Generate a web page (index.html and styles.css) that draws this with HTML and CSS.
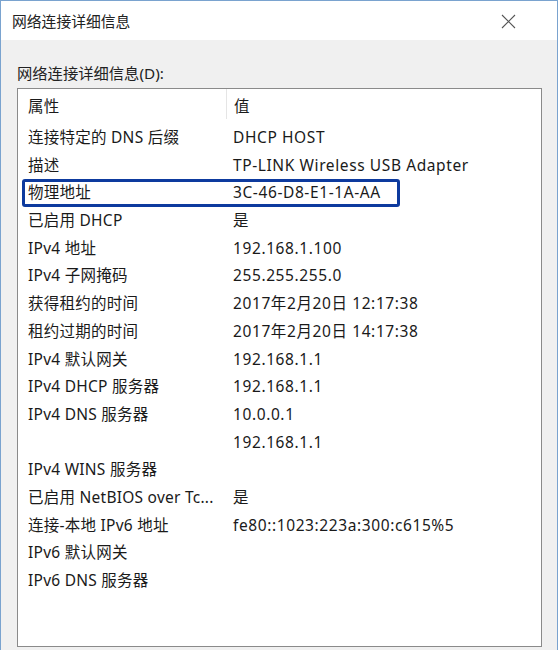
FILE: index.html
```html
<!DOCTYPE html>
<html lang="zh-CN">
<head>
    <meta charset="UTF-8">
    <title>网络连接详细信息</title>
    <link rel="stylesheet" href="styles.css">
</head>
<body>
    <div class="window">
        <div class="titlebar">
            <span class="title">网络连接详细信息</span>
            <svg class="close" width="15" height="15" viewBox="0 0 15 15">
                <path d="M1 1 L14 14 M14 1 L1 14" stroke="#555" stroke-width="1.1" fill="none"/>
            </svg>
        </div>

        <div class="content">
            <div class="label">网络连接详细信息(D):</div>
            <div class="listbox">
                <div class="header">
                    <div class="col1">属性</div>
                    <div class="col2">值</div>
                </div>
                <div class="row"><div class="col1">连接特定的 DNS 后缀</div><div class="col2">DHCP HOST</div></div>
                <div class="row"><div class="col1">描述</div><div class="col2">TP-LINK Wireless USB Adapter</div></div>
                <div class="row marked"><div class="col1">物理地址</div><div class="col2">3C-46-D8-E1-1A-AA</div><span class="mark"></span></div>
                <div class="row"><div class="col1">已启用 DHCP</div><div class="col2">是</div></div>
                <div class="row"><div class="col1">IPv4 地址</div><div class="col2">192.168.1.100</div></div>
                <div class="row"><div class="col1">IPv4 子网掩码</div><div class="col2">255.255.255.0</div></div>
                <div class="row"><div class="col1">获得租约的时间</div><div class="col2">2017年2月20日 12:17:38</div></div>
                <div class="row"><div class="col1">租约过期的时间</div><div class="col2">2017年2月20日 14:17:38</div></div>
                <div class="row"><div class="col1">IPv4 默认网关</div><div class="col2">192.168.1.1</div></div>
                <div class="row"><div class="col1">IPv4 DHCP 服务器</div><div class="col2">192.168.1.1</div></div>
                <div class="row"><div class="col1">IPv4 DNS 服务器</div><div class="col2">10.0.0.1</div></div>
                <div class="row"><div class="col1"></div><div class="col2">192.168.1.1</div></div>
                <div class="row"><div class="col1">IPv4 WINS 服务器</div><div class="col2"></div></div>
                <div class="row"><div class="col1">已启用 NetBIOS over Tc...</div><div class="col2">是</div></div>
                <div class="row"><div class="col1">连接-本地 IPv6 地址</div><div class="col2">fe80::1023:223a:300:c615%5</div></div>
                <div class="row"><div class="col1">IPv6 默认网关</div><div class="col2"></div></div>
                <div class="row"><div class="col1">IPv6 DNS 服务器</div><div class="col2"></div></div>
            </div>
        </div>
    </div>
</body>
</html>
```

FILE: styles.css
```css
body {
    margin: 0;
    background: #f0f0f0;
    font-family: "Noto Sans", "Noto Sans CJK SC", sans-serif;
    color: #1a1a1a;
}

.window {
    width: 558px;
    height: 650px;
    box-sizing: border-box;
    border: 1px solid #7aa3cf;
    border-bottom: none;
    background: #f0f0f0;
    overflow: hidden;
}

.titlebar {
    height: 39px;
    background: #fff;
    display: flex;
    align-items: center;
    justify-content: space-between;
    padding: 0 41px 0 11px;
}

.title {
    font-size: 14.8px;
    color: #222;
}

.close {
    display: block;
    margin-top: 2px;
}

.content {
    padding: 0 15px 0 16px;
}

.label {
    font-size: 15.3px;
    height: 48px;
    line-height: 20px;
    padding-top: 23px;
    box-sizing: border-box;
    color: #222;
}

.listbox {
    background: #fff;
    border: 1px solid #8a8a8a;
    height: 557px;
    font-size: 15.5px;
}

.header,
.row {
    display: flex;
}

.header {
    height: 35px;
}

.header .col1 {
    border-right: 1px solid #e5e5e5;
    height: 30px;
}

.header .col1,
.header .col2 {
    line-height: 34px;
}

.row {
    height: 27.7px;
    line-height: 27.7px;
    position: relative;
}

.col1 {
    width: 198px;
    padding-left: 10px;
    flex-shrink: 0;
    white-space: nowrap;
    letter-spacing: 0.25px;
}

.col2 {
    padding-left: 7px;
    white-space: nowrap;
    letter-spacing: 0.6px;
}

.mark {
    position: absolute;
    left: 4px;
    top: 0;
    width: 378px;
    height: 28px;
    border: 3.5px solid #0d3a9e;
    border-radius: 3px;
    box-sizing: border-box;
}
```
